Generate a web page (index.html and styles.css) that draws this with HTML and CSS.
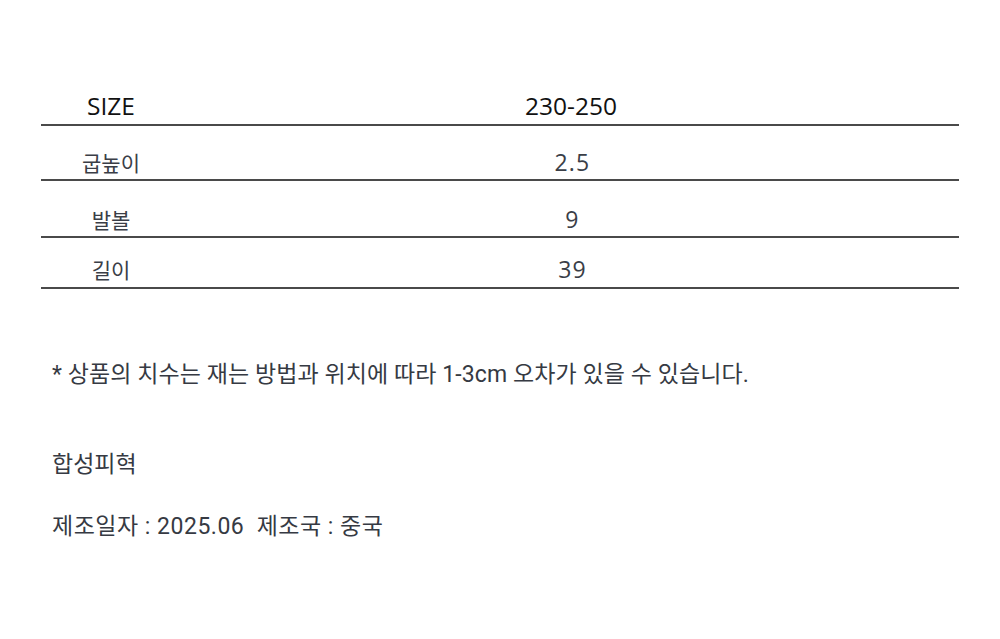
FILE: index.html
```html
<!DOCTYPE html>
<html lang="ko">
<head>
<meta charset="utf-8">
<link rel="stylesheet" href="styles.css">
</head>
<body>
<div class="page">
  <div class="size-table">
    <div class="row head">
      <div class="label">SIZE</div>
      <div class="value">230-250</div>
    </div>
    <div class="row r1">
      <div class="label">굽높이</div>
      <div class="value">2.5</div>
    </div>
    <div class="row r2">
      <div class="label">발볼</div>
      <div class="value">9</div>
    </div>
    <div class="row r3">
      <div class="label">길이</div>
      <div class="value">39</div>
    </div>
  </div>
  <div class="notes">
    <p class="note">* 상품의 치수는 재는 방법과 위치에 따라 1-3cm 오차가 있을 수 있습니다.</p>
    <p class="material">합성피혁</p>
    <p class="origin">제조일자 : 2025.06 &nbsp;제조국 : 중국</p>
  </div>
</div>
</body>
</html>
```

FILE: styles.css
```css
html, body {
  margin: 0;
  padding: 0;
  background: #ffffff;
}

.page {
  width: 1000px;
  height: 639px;
  overflow: hidden;
  box-sizing: border-box;
  padding-top: 92px;
}

.size-table {
  margin-left: 41px;
  width: 918px;
}

.row {
  display: grid;
  grid-template-columns: 140px 1fr;
  align-items: end;
  border-bottom: 2px solid #4a4a4a;
  box-sizing: border-box;
}

.label, .value {
  text-align: center;
}

.head {
  height: 34px;
  padding-bottom: 4px;
  font-family: "Open Sans", "Noto Sans CJK KR", sans-serif;
  font-size: 24.5px;
  line-height: 28px;
  color: #111111;
}

.head .value {
  padding-left: 2px;
}

.r1, .r2, .r3 {
  color: #3a3e47;
  line-height: 24px;
}

.r1 { height: 55px; padding-bottom: 5px; }
.r2 { height: 57px; padding-bottom: 5px; }
.r3 { height: 51px; padding-bottom: 6px; }

.r1 .label, .r2 .label, .r3 .label {
  font-family: "Noto Sans CJK KR", sans-serif;
  font-size: 21px;
}

.r1 .value, .r2 .value, .r3 .value {
  font-family: "Open Sans", "Noto Sans CJK KR", sans-serif;
  font-size: 23px;
  letter-spacing: 1.2px;
  padding-left: 5px;
}

.notes {
  padding-left: 52px;
  font-family: Roboto, "Noto Sans CJK KR", sans-serif;
  font-size: 23px;
  line-height: 30px;
  color: #363a43;
}

.notes p {
  margin: 0;
}

.note {
  margin-top: 71px !important;
  letter-spacing: 0.08px;
}

.material {
  margin-top: 60px !important;
}

.origin {
  margin-top: 32px !important;
  letter-spacing: 0.5px;
}
```
